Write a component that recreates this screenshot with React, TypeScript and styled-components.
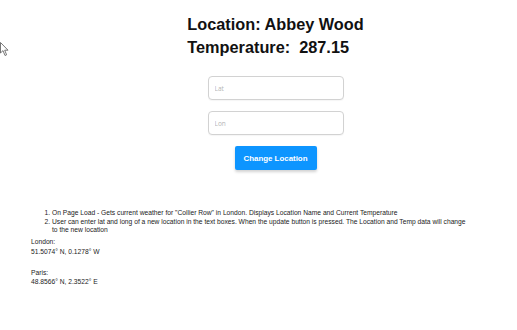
import React from "react";
import styled, { createGlobalStyle } from "styled-components";

const Global = createGlobalStyle`
  html, body { margin: 0; padding: 0; background: #fff; }
  body { font-family: "Liberation Sans", Arial, sans-serif; color: #111; }
`;

const Page = styled.div`
  position: relative;
  width: 517px;
  min-height: 330px;
`;

const Main = styled.div`
  display: flex;
  flex-direction: column;
  align-items: center;
  padding: 13px 0 0 34px;
`;

const Heading = styled.div`
  display: flex;
  flex-direction: column;
  align-items: flex-start;
`;

const Title = styled.h2`
  margin: 0;
  font-size: 16.3px;
  line-height: 23px;
  font-weight: bold;
  color: #111;
  white-space: pre;
`;

const Form = styled.div`
  display: flex;
  flex-direction: column;
  align-items: center;
  gap: 11px;
  margin-top: 17px;
`;

const Input = styled.input`
  box-sizing: border-box;
  width: 136px;
  height: 24px;
  border: 1px solid #d2d2d2;
  border-radius: 4px;
  padding: 0 6px;
  font-family: "Open Sans", "Liberation Sans", sans-serif;
  font-size: 6.5px;
  color: #333;
  box-shadow: 0 1px 1px rgba(0, 0, 0, 0.04);
  outline: none;
  &::placeholder { color: #b5b5b5; }
`;

const Button = styled.button`
  box-sizing: border-box;
  width: 82px;
  height: 24px;
  border: none;
  border-radius: 2px;
  background: #0d95ff;
  color: #fff;
  font-family: "Liberation Sans", Arial, sans-serif;
  font-weight: bold;
  font-size: 7.9px;
  box-shadow: 0 2px 3px rgba(0, 0, 0, 0.18);
  cursor: pointer;
`;

const Notes = styled.div`
  width: 441px;
  padding: 39px 0 0 31px;
  font-size: 6.7px;
  color: #222;
`;

const List = styled.ol`
  margin: 0;
  padding-left: 21px;
  line-height: 8.7px;
`;

const Place = styled.div`
  margin-top: 2px;
  line-height: 9.6px;
`;

const Gap = styled.div`
  height: 9.6px;
`;

const Cursor = styled.svg`
  position: absolute;
  left: 0;
  top: 42px;
`;

export default function App() {
  return (
    <Page>
      <Global />
      <Cursor width="9" height="15" viewBox="0 0 9 15">
        <path d="M0.5 0.5 L0.5 11 L3 8.6 L5 13.5 L6.6 12.8 L4.7 8.2 L8 8.2 Z" fill="#fff" stroke="#555" strokeWidth="0.8" />
      </Cursor>
      <Main>
        <Heading>
          <Title>Location: Abbey Wood</Title>
          <Title>{"Temperature:  287.15"}</Title>
        </Heading>
        <Form>
          <Input placeholder="Lat" />
          <Input placeholder="Lon" />
          <Button>Change Location</Button>
        </Form>
      </Main>
      <Notes>
        <List>
          <li>On Page Load - Gets current weather for "Collier Row" in London. Displays Location Name and Current Temperature</li>
          <li>User can enter lat and long of a new location in the text boxes. When the update button is pressed. The Location and Temp data will change to the new location</li>
        </List>
        <Place>
          London:
          <br />
          51.5074° N, 0.1278° W
        </Place>
        <Gap />
        <Place>
          Paris:
          <br />
          48.8566° N, 2.3522° E
        </Place>
      </Notes>
    </Page>
  );
}
